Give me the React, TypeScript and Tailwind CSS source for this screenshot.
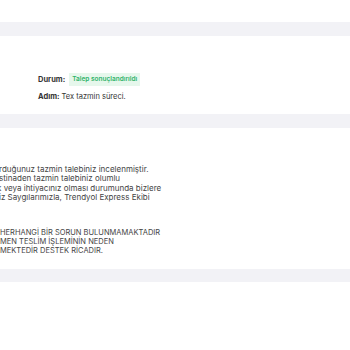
export default function App() {
  const font = { fontFamily: 'Inter, "Noto Sans", sans-serif' };
  return (
    <div className="w-[350px] h-[350px] bg-white overflow-hidden text-[#3a3a3a]" style={font}>
      <div className="h-[22px]" />
      <div className="h-[14px] bg-[#f2f2f6]" />
      <div className="h-[37px]" />
      <div className="pl-[38px] flex flex-col">
        <div className="flex items-center h-[13px]">
          <span className="text-[7.5px] font-bold text-[#333]">Durum:</span>
          <span className="ml-[4px] px-[3px] h-[13px] flex items-center bg-[#e6f7ec] text-[#2fb36a] text-[6.5px] font-semibold">
            Talep sonuçlandırıldı
          </span>
        </div>
        <div className="mt-[6px] flex items-center h-[10px] text-[7.5px] text-[#333]">
          <span className="font-bold">Adım:</span>
          <span className="ml-[2px]">Tex tazmin süreci.</span>
        </div>
      </div>
      <div className="h-[12px]" />
      <div className="h-[14px] bg-[#f2f2f6]" />
      <div className="h-[37px]" />
      <div className="flex flex-col text-[8px] leading-[9.4px] text-[#444] whitespace-nowrap">
        <div className="ml-[-1px]">rduğunuz tazmin talebiniz incelenmiştir.</div>
        <div className="ml-[-1px]">stinaden tazmin talebiniz olumlu</div>
        <div className="ml-[-3px]">k veya ihtiyacınız olması durumunda bizlere</div>
        <div className="ml-[-1px]">iz Saygılarımızla, Trendyol Express Ekibi</div>
      </div>
      <div className="h-[25px]" />
      <div className="flex flex-col text-[7.5px] leading-[9px] text-[#444] whitespace-nowrap">
        <div>HERHANGİ BİR SORUN BULUNMAMAKTADIR</div>
        <div>MEN TESLİM İŞLEMİNİN NEDEN</div>
        <div>MEKTEDİR DESTEK RİCADIR.</div>
      </div>
      <div className="h-[14px]" />
      <div className="h-[13px] bg-[#f2f2f6]" />
    </div>
  );
}
